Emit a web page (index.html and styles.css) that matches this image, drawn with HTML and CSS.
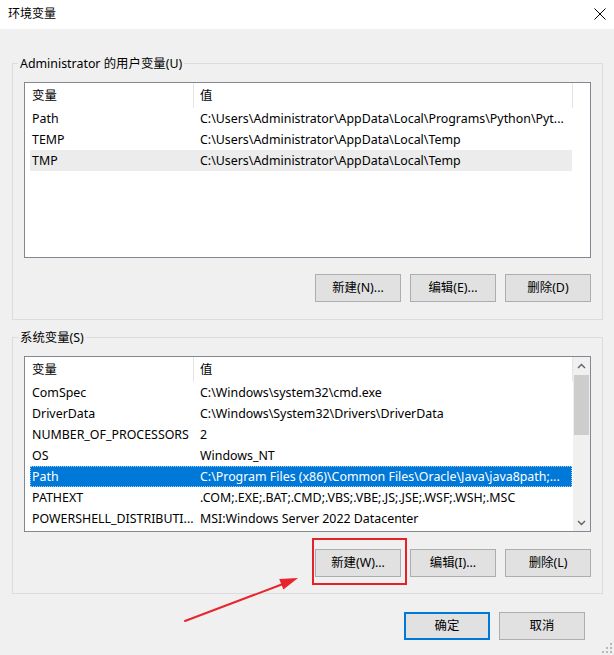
FILE: index.html
```html
<!DOCTYPE html>
<html lang="zh-CN">
<head>
<meta charset="utf-8">
<title>环境变量</title>
<link rel="stylesheet" href="styles.css">
</head>
<body>
<div class="window">
  <div class="titlebar">
    <span class="title">环境变量</span>
    <svg class="close" width="12" height="12" viewBox="0 0 12 12"><path d="M0.5 0.5 L11.5 11.5 M11.5 0.5 L0.5 11.5" stroke="#000" stroke-width="1" fill="none"/></svg>
  </div>
  <div class="client">
    <fieldset class="group group-user">
      <legend>Administrator 的用户变量(U)</legend>
      <div class="listview">
        <div class="lv-main">
          <div class="lv-header">
            <div class="hcell hcell-name">变量</div>
            <div class="hcell hcell-value">值</div>
          </div>
          <div class="lv-body">
            <div class="row"><span class="cell">Path</span><span class="cell">C:\Users\Administrator\AppData\Local\Programs\Python\Pyt...</span></div>
            <div class="row"><span class="cell">TEMP</span><span class="cell">C:\Users\Administrator\AppData\Local\Temp</span></div>
            <div class="row row-inactive"><span class="cell">TMP</span><span class="cell">C:\Users\Administrator\AppData\Local\Temp</span></div>
          </div>
        </div>
      </div>
      <div class="btnrow">
        <button class="btn">新建(N)...</button>
        <button class="btn">编辑(E)...</button>
        <button class="btn">删除(D)</button>
      </div>
    </fieldset>

    <fieldset class="group group-sys">
      <legend>系统变量(S)</legend>
      <div class="listview">
        <div class="lv-main">
          <div class="lv-header">
            <div class="hcell hcell-name">变量</div>
            <div class="hcell hcell-value">值</div>
          </div>
          <div class="lv-body">
            <div class="row"><span class="cell">ComSpec</span><span class="cell">C:\Windows\system32\cmd.exe</span></div>
            <div class="row"><span class="cell">DriverData</span><span class="cell">C:\Windows\System32\Drivers\DriverData</span></div>
            <div class="row"><span class="cell">NUMBER_OF_PROCESSORS</span><span class="cell">2</span></div>
            <div class="row"><span class="cell">OS</span><span class="cell">Windows_NT</span></div>
            <div class="row row-selected"><span class="cell">Path</span><span class="cell">C:\Program Files (x86)\Common Files\Oracle\Java\java8path;...</span></div>
            <div class="row"><span class="cell">PATHEXT</span><span class="cell">.COM;.EXE;.BAT;.CMD;.VBS;.VBE;.JS;.JSE;.WSF;.WSH;.MSC</span></div>
            <div class="row"><span class="cell">POWERSHELL_DISTRIBUTI...</span><span class="cell">MSI:Windows Server 2022 Datacenter</span></div>
          </div>
        </div>
        <div class="scrollbar">
          <div class="sb-arrow">
            <svg width="9" height="6" viewBox="0 0 9 6"><path d="M1 5 L4.5 1.5 L8 5" stroke="#606060" stroke-width="1.4" fill="none"/></svg>
          </div>
          <div class="sb-track"><div class="sb-thumb"></div></div>
          <div class="sb-arrow">
            <svg width="9" height="6" viewBox="0 0 9 6"><path d="M1 1 L4.5 4.5 L8 1" stroke="#606060" stroke-width="1.4" fill="none"/></svg>
          </div>
        </div>
      </div>
      <div class="btnrow">
        <button class="btn btn-marked">新建(W)...</button>
        <button class="btn">编辑(I)...</button>
        <button class="btn">删除(L)</button>
      </div>
    </fieldset>

    <div class="footer">
      <button class="btn btn-default">确定</button>
      <button class="btn">取消</button>
    </div>
  </div>

  <svg class="grip" width="10" height="10" viewBox="0 0 10 10">
    <rect x="8" y="0" width="2" height="2" fill="#b8b8b8"/>
    <rect x="4" y="4" width="2" height="2" fill="#b8b8b8"/>
    <rect x="8" y="4" width="2" height="2" fill="#b8b8b8"/>
    <rect x="0" y="8" width="2" height="2" fill="#b8b8b8"/>
    <rect x="4" y="8" width="2" height="2" fill="#b8b8b8"/>
    <rect x="8" y="8" width="2" height="2" fill="#b8b8b8"/>
  </svg>

  <svg class="arrow" width="614" height="655" viewBox="0 0 614 655">
    <line x1="185" y1="621" x2="283" y2="584" stroke="#e8242c" stroke-width="2" stroke-linecap="round"/>
    <polygon points="298,578 283.4,589.6 279.2,579.0" fill="#e8242c"/>
  </svg>
</div>
</body>
</html>
```

FILE: styles.css
```css
*, *::before, *::after {
  box-sizing: border-box;
}

html, body {
  margin: 0;
  padding: 0;
  background: #f0f0f0;
}

body {
  font-family: "Noto Sans", "Noto Sans CJK SC", sans-serif;
  font-size: 12.4px;
  color: #000;
}

.window {
  position: relative;
  width: 614px;
  height: 655px;
  background: #f0f0f0;
  overflow: hidden;
}

.titlebar {
  height: 29px;
  background: #fff;
  display: flex;
  align-items: center;
  justify-content: space-between;
  padding: 0 8px 2px 8px;
}

.title {
  font-size: 12px;
  line-height: 16px;
}

.close {
  display: block;
}

.client {
  display: flex;
  flex-direction: column;
}

.group {
  margin: 0 0 0 12px;
  width: 591px;
  min-width: 0;
  border: 1px solid #dcdcdc;
  padding: 10px 11px 17px 11px;
}

.group-user {
  margin-top: 26px;
}

.group-sys {
  margin-top: 9px;
  padding-bottom: 16px;
}

.group legend {
  font-size: 12.4px;
  line-height: 17px;
  padding: 0 2px;
  margin-left: -6px;
}

.listview {
  height: 176px;
  border: 1px solid #828790;
  background: #fff;
  display: flex;
}

.lv-main {
  flex: 1;
  min-width: 0;
}

.lv-header {
  height: 25px;
  display: flex;
}

.hcell {
  line-height: 25px;
  height: 25px;
  border-right: 1px solid #e5e5e5;
}

.hcell-name {
  width: 169px;
  padding-left: 7px;
}

.hcell-value {
  width: 379px;
  padding-left: 6px;
}

.lv-body {
  padding-left: 5px;
}

.row {
  width: 542px;
  height: 21px;
  display: grid;
  grid-template-columns: 168px 374px;
  line-height: 21px;
  white-space: nowrap;
}

.cell {
  padding-left: 2px;
  overflow: hidden;
}

.row-inactive {
  background: #ececec;
}

.row-selected {
  background: #0078d7;
  color: #fff;
  outline: 1px dotted #9fcdf2;
  outline-offset: -1px;
}

.scrollbar {
  width: 17px;
  background: #f0f0f0;
  display: flex;
  flex-direction: column;
}

.sb-arrow {
  height: 17px;
  display: flex;
  align-items: center;
  justify-content: center;
}

.sb-track {
  flex: 1;
  padding: 1px 1px 0 1px;
}

.sb-thumb {
  height: 60px;
  background: #cdcdcd;
}

.btnrow {
  display: flex;
  justify-content: flex-end;
  gap: 9px;
  margin-top: 16px;
}

.group-sys .btnrow {
  margin-top: 17px;
}

.btn {
  width: 86px;
  height: 28px;
  padding: 0;
  background: #e1e1e1;
  border: 1px solid #adadad;
  font-family: "Noto Sans", "Noto Sans CJK SC", sans-serif;
  font-size: 12.4px;
  color: #000;
  line-height: 16px;
}

.btn-marked {
  position: relative;
}

.btn-marked::after {
  content: "";
  position: absolute;
  left: -4px;
  top: -12px;
  width: 95px;
  height: 47px;
  border: 2px solid #e8202a;
}

.btn-default {
  border: 2px solid #0078d7;
}

.footer {
  display: flex;
  justify-content: flex-end;
  gap: 9px;
  margin-top: 18px;
  padding-right: 29px;
}

.grip {
  position: absolute;
  right: 2px;
  bottom: 2px;
}

.arrow {
  position: absolute;
  left: 0;
  top: 0;
  pointer-events: none;
}
```
